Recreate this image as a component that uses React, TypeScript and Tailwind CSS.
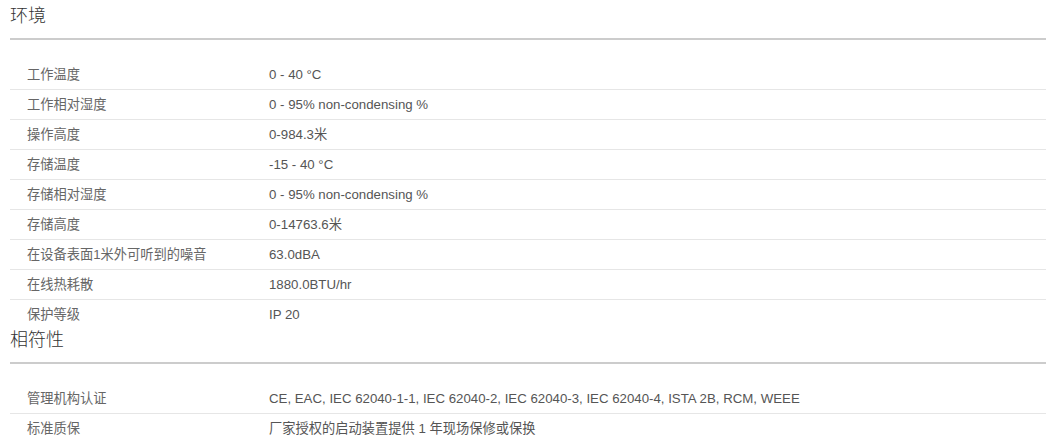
import React from 'react';

interface SpecRow {
  label: string;
  value: string;
}

interface SpecSection {
  title: string;
  rows: SpecRow[];
}

const sections: SpecSection[] = [
  {
    title: '环境',
    rows: [
      { label: '工作温度', value: '0 - 40 °C' },
      { label: '工作相对湿度', value: '0 - 95% non-condensing %' },
      { label: '操作高度', value: '0-984.3米' },
      { label: '存储温度', value: '-15 - 40 °C' },
      { label: '存储相对湿度', value: '0 - 95% non-condensing %' },
      { label: '存储高度', value: '0-14763.6米' },
      { label: '在设备表面1米外可听到的噪音', value: '63.0dBA' },
      { label: '在线热耗散', value: '1880.0BTU/hr' },
      { label: '保护等级', value: 'IP 20' },
    ],
  },
  {
    title: '相符性',
    rows: [
      { label: '管理机构认证', value: 'CE, EAC, IEC 62040-1-1, IEC 62040-2, IEC 62040-3, IEC 62040-4, ISTA 2B, RCM, WEEE' },
      { label: '标准质保', value: '厂家授权的启动装置提供 1 年现场保修或保换' },
    ],
  },
];

const SpecTable = ({ section }: { section: SpecSection }) => (
  <div>
    <h2 className="text-[18px] leading-[20px] pb-[12px] border-b-2 border-[#cccccc] text-[#333333] font-light">
      {section.title}
    </h2>
    <div className="mt-[20px]">
      {section.rows.map((row, i) => (
        <div
          key={row.label}
          className={`flex h-[30px] leading-[29px] text-[13.25px] ${
            i < section.rows.length - 1 ? 'border-b border-[#e6e6e6]' : ''
          }`}
        >
          <div className="w-[259px] pl-[17px] text-[#666666] shrink-0">{row.label}</div>
          <div className="text-[#555555]">{row.value}</div>
        </div>
      ))}
    </div>
  </div>
);

export default function App() {
  return (
    <div
      className="bg-white w-[1053px] h-[443px] overflow-hidden"
      style={{ fontFamily: '"Liberation Sans", "Noto Sans CJK SC", sans-serif' }}
    >
      <div className="ml-[10px] w-[1036px] pt-[6px]">
        {sections.map((s) => (
          <SpecTable key={s.title} section={s} />
        ))}
      </div>
    </div>
  );
}
